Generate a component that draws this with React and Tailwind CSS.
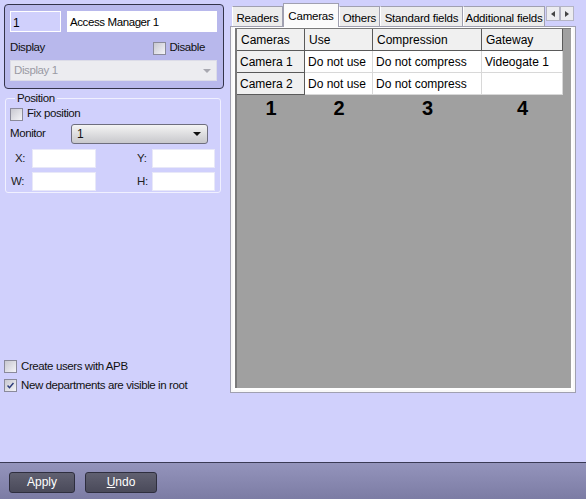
import React from "react";

const font = { fontFamily: '"Liberation Sans", Arial, sans-serif' };

function Check({ checked }) {
  return (
    <span className="relative inline-block w-[13px] h-[13px] border border-[#8a8a9a] bg-gradient-to-br from-[#c8c8d0] to-[#f4f4f8] shrink-0">
      {checked && (
        <svg viewBox="0 0 13 13" className="absolute inset-0 w-full h-full">
          <path d="M3 6.5 L5.3 9 L10 3.5" fill="none" stroke="#2a3a7a" strokeWidth="1.7" />
        </svg>
      )}
    </span>
  );
}

function Field({ className = "" }) {
  return <div className={"h-[19px] bg-white border border-[#e8e8f8] " + className} />;
}

function Tab({ label, active, w }) {
  return active ? (
    <div className={w + " relative z-10 h-[24px] pt-[4px] text-center bg-[#fbfbfb] border border-b-0 border-[#a0a0b0] -mb-px text-[11.5px] text-black whitespace-nowrap"}>
      {label}
    </div>
  ) : (
    <div className={w + " h-[20px] pt-[3px] text-center bg-[#ececec] border border-b-0 border-[#a0a0b0] border-l-white text-[11.5px] text-black whitespace-nowrap"}>
      {label}
    </div>
  );
}

const rows = [
  ["Camera 1", "Do not use", "Do not compress", "Videogate 1"],
  ["Camera 2", "Do not use", "Do not compress", ""],
];
const widths = ["w-[68px]", "w-[68px]", "w-[109px]", "w-[81px]"];

export default function App() {
  return (
    <div className="w-[586px] h-[499px] flex flex-col bg-[#d0d0fc] overflow-hidden" style={font}>
      <div className="flex-1 flex min-h-0">
        {/* left column */}
        <div className="w-[228px] flex flex-col pl-[4px] pt-[4px] text-[11.5px] tracking-[-0.4px]">
          <div className="w-[220px] h-[85px] rounded-[4px] border border-[#33334a] bg-[#b8b8ec] px-[5px] pt-[6px]">
            <div className="flex gap-[6px] text-[12px]">
              <div className="w-[51px] h-[21px] border border-white bg-[#d0d0fc] pl-[2px] pt-[2px]">1</div>
              <div className="w-[150px] h-[21px] bg-white pl-[3px] pt-[3px] text-[11.5px]">Access Manager 1</div>
            </div>
            <div className="flex items-center h-[24px] mt-[4px] text-[#111]">
              <span>Display</span>
              <span className="ml-auto mr-[13px] flex items-center gap-[3px]">
                <Check />
                <span>Disable</span>
              </span>
            </div>
            <div className="w-[207px] h-[21px] bg-[#ececf0] border border-[#dcdce8] flex items-center pl-[3px] text-[#9a9aa4]">
              <span>Display 1</span>
              <svg viewBox="0 0 8 4" className="ml-auto mr-[5px] w-[8px] h-[4px]">
                <path d="M0 0 H8 L4 4 Z" fill="#a8a8b0" />
              </svg>
            </div>
          </div>

          <fieldset className="w-[216px] mt-[2px] ml-px border border-[#f0f0ff] rounded-[3px] px-[4px] pb-[1px] text-[#111]">
            <legend className="px-[2px] ml-[5px] leading-[14px]">Position</legend>
            <div className="flex items-center gap-[4px] h-[14px] mt-[2px]">
              <Check />
              <span>Fix position</span>
            </div>
            <div className="flex items-center h-[22px] mt-[2px]">
              <span className="w-[61px]">Monitor</span>
              <div className="w-[137px] h-[20px] rounded-[3px] border border-[#6e6e7e] bg-gradient-to-b from-[#f4f4f4] to-[#c8c8cc] flex items-center pl-[5px] text-[12px]">
                <span>1</span>
                <svg viewBox="0 0 8 4" className="ml-auto mr-[6px] w-[8px] h-[4px]">
                  <path d="M0 0 H8 L4 4 Z" fill="#111" />
                </svg>
              </div>
            </div>
            <div className="flex items-center h-[19px] mt-[4px] text-[#222]">
              <span className="w-[22px] pl-[5px]">X:</span>
              <Field className="w-[64px]" />
              <span className="w-[56px] pl-[41px]">Y:</span>
              <Field className="w-[63px]" />
            </div>
            <div className="flex items-center h-[19px] mt-[4px] text-[#222]">
              <span className="w-[22px] pl-[1px]">W:</span>
              <Field className="w-[64px]" />
              <span className="w-[56px] pl-[41px]">H:</span>
              <Field className="w-[63px]" />
            </div>
          </fieldset>

          <div className="flex-1" />
          <div className="flex flex-col gap-[6px] text-[#111] pb-[70px]">
            <div className="flex items-center gap-[4px] h-[13px]">
              <Check />
              <span>Create users with APB</span>
            </div>
            <div className="flex items-center gap-[4px] h-[13px]">
              <Check checked />
              <span>New departments are visible in root</span>
            </div>
          </div>
        </div>

        {/* right column */}
        <div className="flex-1 flex flex-col pl-[2px] pt-[3px]">
          <div className="flex items-end pl-[2px] h-[23px] tracking-[-0.2px]">
            <Tab label="Readers" w="w-[51px]" />
            <Tab label="Cameras" active w="w-[56px]" />
            <Tab label="Others" w="w-[41px]" />
            <Tab label="Standard fields" w="w-[83px]" />
            <Tab label="Additional fields" w="w-[82px]" />
            <div className="flex self-start mt-[3px] ml-[1px]">
              {["M4 0 L0 3 L4 6 Z", "M0 0 L4 3 L0 6 Z"].map((d, i) => (
                <div key={i} className="w-[14px] h-[15px] bg-[#ececf0] border border-[#b4b4c4] flex items-center justify-center">
                  <svg viewBox="0 0 4 6" className="w-[4px] h-[6px]">
                    <path d={d} fill="#444" />
                  </svg>
                </div>
              ))}
            </div>
          </div>
          <div className="w-[346px] h-[367px] border border-[#a0a0b0] bg-[#f8f8f8] px-[2px] pb-[2px]">
            <div className="w-full h-full border-x-2 border-b-2 border-t border-white">
              <div className="w-full h-full bg-[#a0a0a0] border-l-2 border-t border-[#7a7a7a]">
                <div className="flex flex-col text-[12px] text-black">
                  <div className="flex h-[22px]">
                    {["Cameras", "Use", "Compression", "Gateway"].map((h, i) => (
                      <div key={h} className={widths[i] + " bg-[#f0f0f0] border-r border-b border-[#5a5a5a] pl-[4px] flex items-center"}>
                        {h}
                      </div>
                    ))}
                  </div>
                  {rows.map((r) => (
                    <div key={r[0]} className="flex h-[22px]">
                      {r.map((c, i) => (
                        <div
                          key={i}
                          className={
                            widths[i] +
                            (i === 0
                              ? " bg-[#f0f0f0] border-r border-b border-[#5a5a5a]"
                              : " bg-white border-r border-b border-[#d8d8d8]") +
                            " pl-[3px] flex items-center"
                          }
                        >
                          {c}
                        </div>
                      ))}
                    </div>
                  ))}
                </div>
                <div className="flex text-[20px] font-bold text-black leading-none mt-[3px]">
                  {["1", "2", "3", "4"].map((n, i) => (
                    <div key={n} className={widths[i] + " text-center"}>
                      {n}
                    </div>
                  ))}
                </div>
              </div>
            </div>
          </div>
        </div>
      </div>

      {/* bottom bar */}
      <div className="h-[37px] border-t border-[#3a3a55] bg-gradient-to-b from-[#9494bc] to-[#7c7ca4] flex items-center gap-[10px] pl-[9px] pt-[2px]">
        <button className="w-[66px] h-[21px] rounded-[3px] border border-[#2e2e3e] bg-gradient-to-b from-[#606070] to-[#4a4a5a] text-[12px] text-white">
          Apply
        </button>
        <button className="w-[72px] h-[21px] rounded-[3px] border border-[#2e2e3e] bg-gradient-to-b from-[#606070] to-[#4a4a5a] text-[12px] text-white">
          <span className="underline">U</span>ndo
        </button>
      </div>
    </div>
  );
}
